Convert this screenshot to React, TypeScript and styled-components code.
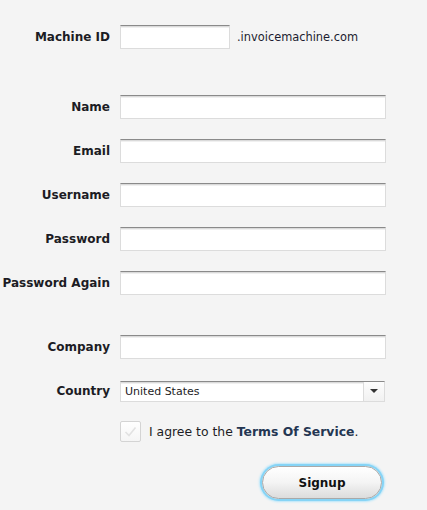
import React from 'react'
import { styled, createGlobalStyle } from 'styled-components'

const GlobalStyle = createGlobalStyle`
    html, body {
        margin: 0;
        padding: 0;
        background: #f4f4f4;
    }
    body {
        font-family: "DejaVu Sans", Verdana, sans-serif;
        color: #1c1c24;
    }
`

const Form = styled.form`
    display: flex;
    flex-direction: column;
    padding-top: 25px;
    width: 427px;
    height: 485px;
`

const Row = styled.div<{ $top?: number }>`
    display: grid;
    grid-template-columns: 110px auto;
    column-gap: 10px;
    align-items: center;
    height: 24px;
    margin-top: ${p => p.$top ?? 20}px;
`

const Label = styled.label`
    text-align: right;
    font-weight: bold;
    font-size: 12px;
    white-space: nowrap;
`

const Field = styled.div`
    display: flex;
    align-items: center;
    gap: 7px;
`

const TextInput = styled.input<{ $width?: number }>`
    box-sizing: border-box;
    width: ${p => p.$width ?? 266}px;
    height: 24px;
    margin: 0;
    padding: 2px 5px;
    background: #fff;
    border: 1px solid #dcdcdc;
    border-top: 1px solid #8a8a8a;
    box-shadow: inset 0 1px 0 #dadada, inset 0 2px 0 #f0f0f0;
    font-family: inherit;
    font-size: 12px;
    outline: none;
`

const Suffix = styled.span`
    font-size: 11.4px;
    color: #1c1c30;
`

const SelectBox = styled.div`
    box-sizing: border-box;
    display: flex;
    width: 265px;
    height: 21px;
    background: #fff;
    border: 1px solid #dcdcdc;
    border-top: 1px solid #8a8a8a;
    box-shadow: inset 0 1px 0 #dadada, inset 0 2px 0 #f0f0f0;
`

const Select = styled.select`
    flex: 1;
    appearance: none;
    border: none;
    background: transparent;
    padding: 1px 4px 0;
    font-family: inherit;
    font-size: 11px;
    color: #1c1c24;
    outline: none;
`

const ArrowBox = styled.span`
    display: flex;
    align-items: center;
    justify-content: center;
    width: 20px;
    border-left: 1px solid #dcdcdc;
    background: linear-gradient(#fdfdfd, #f1f1f1);
`

const Arrow = styled.span`
    width: 0;
    height: 0;
    border-left: 4px solid transparent;
    border-right: 4px solid transparent;
    border-top: 4px solid #333;
`

const AgreeRow = styled.label`
    display: flex;
    align-items: center;
    gap: 8px;
    margin: 18px 0 0 120px;
    font-size: 12.4px;
    color: #1c1c24;
`

const CheckBox = styled.span`
    box-sizing: border-box;
    display: flex;
    align-items: center;
    justify-content: center;
    width: 21px;
    height: 21px;
    border: 1px solid #d4d4d4;
    border-radius: 2px;
    background: linear-gradient(#ffffff, #f5f5f5);
`

const TermsLink = styled.a`
    font-weight: bold;
    color: #243652;
    text-decoration: none;
`

const ButtonRow = styled.div`
    display: flex;
    margin: 24px 0 0 262px;
`

const Button = styled.button`
    box-sizing: border-box;
    width: 120px;
    height: 33px;
    border-radius: 17px;
    border: 1px solid #a9a9a9;
    box-shadow: 0 0 0 2px #86d4f6, 0 0 2px 3px #b8e6fa;
    background: linear-gradient(#ffffff 0%, #f4f4f4 50%, #dcdcdc 100%);
    font-family: inherit;
    font-weight: bold;
    font-size: 12px;
    color: #111;
    cursor: pointer;
`

const Signup: React.FC = () => {
    return (<>
        <GlobalStyle />
        <Form onSubmit={e => e.preventDefault()}>
            <Row $top={0}>
                <Label>Machine ID</Label>
                <Field>
                    <TextInput $width={110} />
                    <Suffix>.invoicemachine.com</Suffix>
                </Field>
            </Row>
            <Row $top={46}>
                <Label>Name</Label>
                <TextInput />
            </Row>
            <Row>
                <Label>Email</Label>
                <TextInput />
            </Row>
            <Row>
                <Label>Username</Label>
                <TextInput />
            </Row>
            <Row>
                <Label>Password</Label>
                <TextInput type="password" />
            </Row>
            <Row>
                <Label>Password Again</Label>
                <TextInput type="password" />
            </Row>
            <Row $top={40}>
                <Label>Company</Label>
                <TextInput />
            </Row>
            <Row>
                <Label>Country</Label>
                <SelectBox>
                    <Select defaultValue="United States">
                        <option>United States</option>
                        <option>Canada</option>
                        <option>United Kingdom</option>
                    </Select>
                    <ArrowBox><Arrow /></ArrowBox>
                </SelectBox>
            </Row>
            <AgreeRow>
                <CheckBox>
                    <svg width="13" height="11" viewBox="0 0 13 11">
                        <path d="M1.5 6 L5 9.5 L11.5 1.5" fill="none" stroke="#e2e2e2" strokeWidth="1.6" />
                    </svg>
                </CheckBox>
                <span>I agree to the <TermsLink href="#">Terms Of Service</TermsLink>.</span>
            </AgreeRow>
            <ButtonRow>
                <Button type="submit">Signup</Button>
            </ButtonRow>
        </Form>
    </>
    )
}

export default Signup
